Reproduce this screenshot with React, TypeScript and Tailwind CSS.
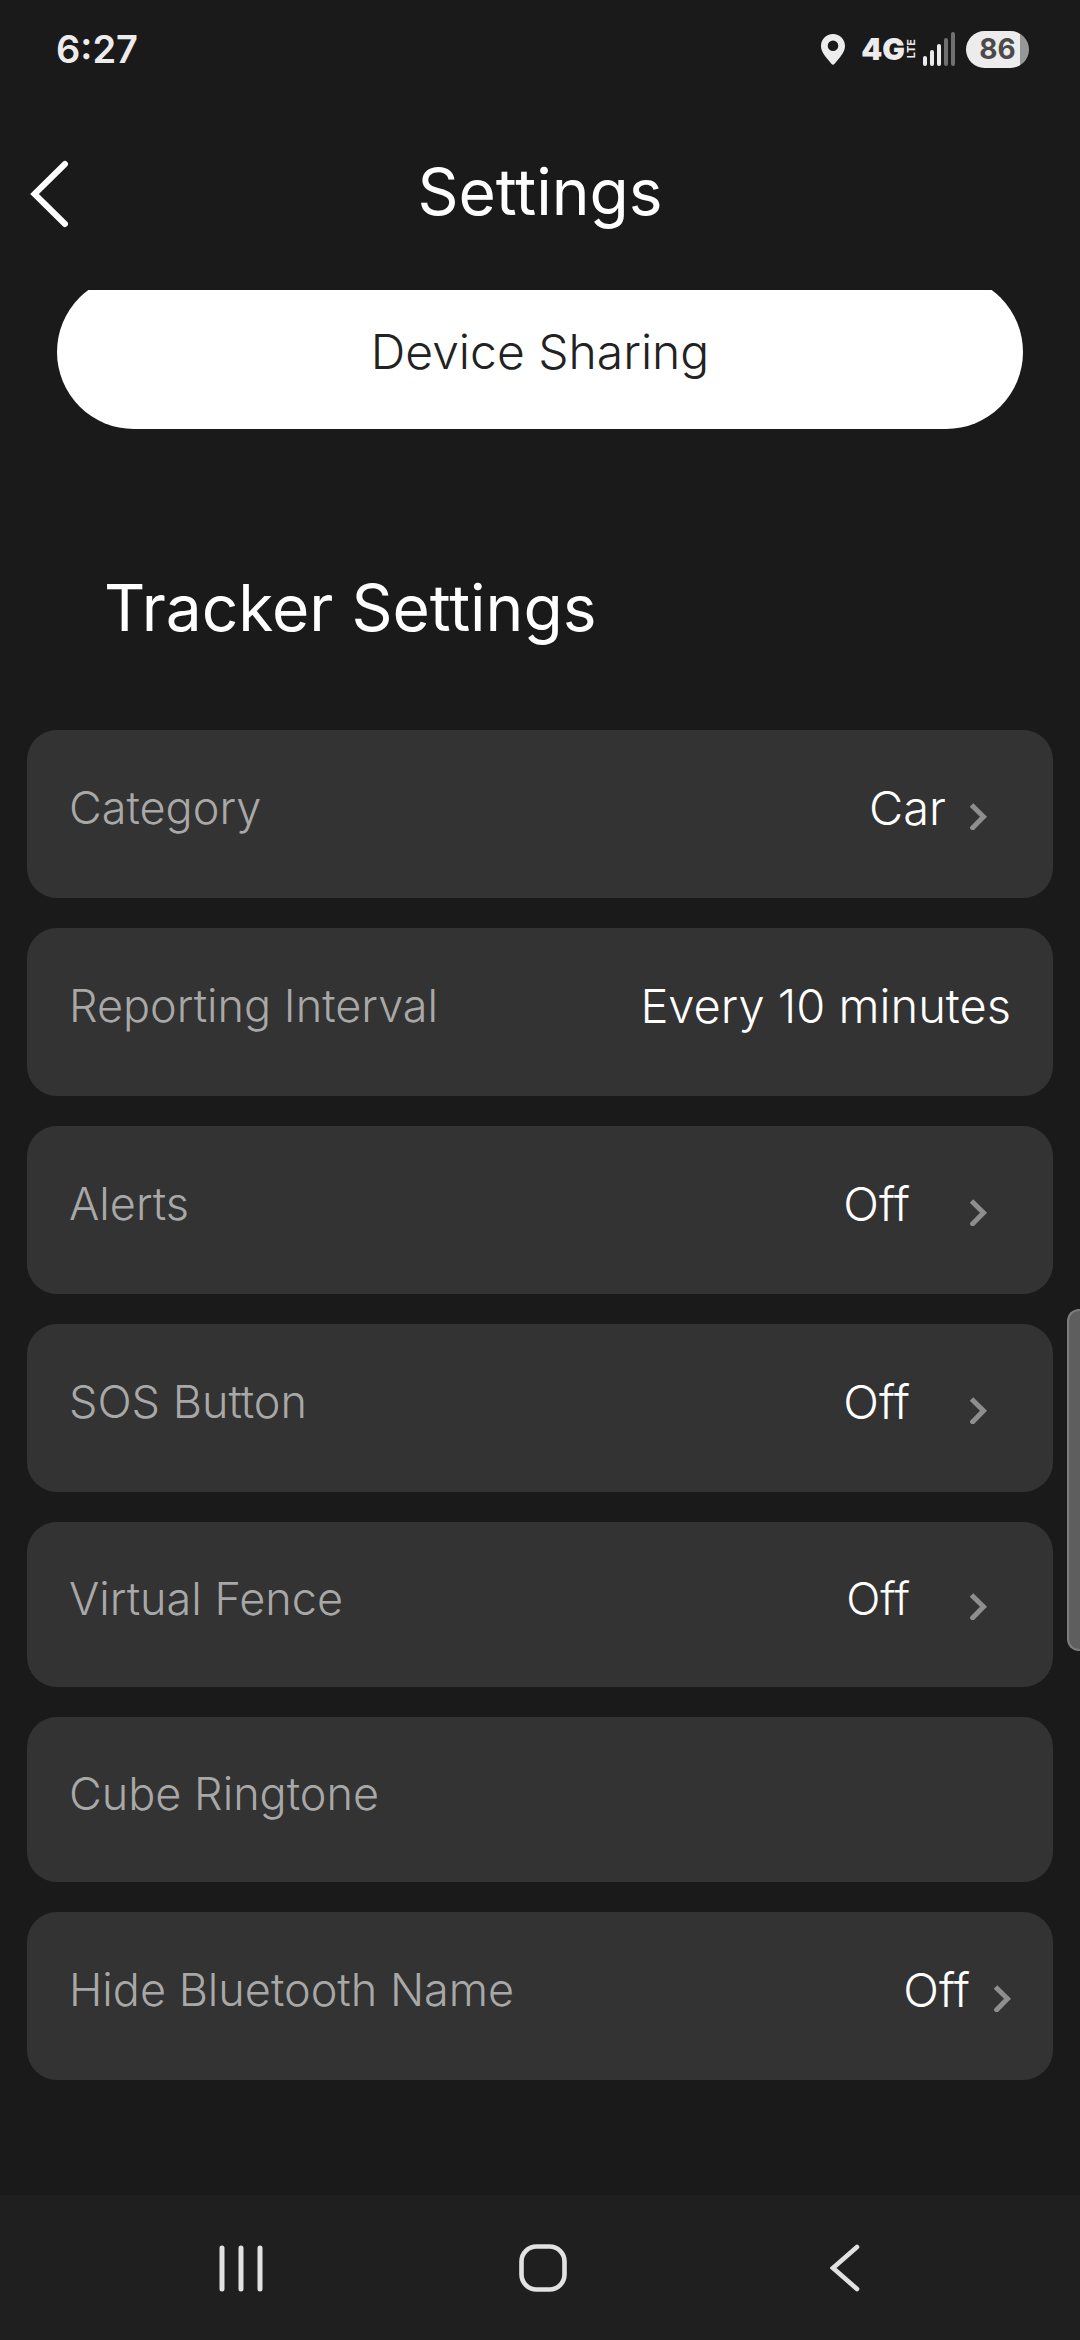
import React from 'react';

interface SettingItem {
  label: string;
  value?: string;
  chevron?: boolean;
  compact?: boolean;
  rightClass?: string;
}

const SETTINGS: SettingItem[] = [
  { label: 'Category', value: 'Car', chevron: true, rightClass: 'gap-6 pr-6' },
  { label: 'Reporting Interval', value: 'Every 10 minutes' },
  { label: 'Alerts', value: 'Off', chevron: true, rightClass: 'gap-[60px] pr-6' },
  { label: 'SOS Button', value: 'Off', chevron: true, rightClass: 'gap-[60px] pr-6' },
  { label: 'Virtual Fence', value: 'Off', chevron: true, compact: true, rightClass: 'gap-[60px] pr-6' },
  { label: 'Cube Ringtone', compact: true },
  { label: 'Hide Bluetooth Name', value: 'Off', chevron: true, rightClass: 'gap-6' },
];

const StatusBar: React.FC = () => (
  <div className="flex h-[98px] items-center justify-between pr-[51px] pl-14 text-[#ececec]">
    <time className="text-[38px] font-semibold">6:27</time>
    <div className="flex items-center">
      <svg width="24" height="31" viewBox="0 0 24 31" fill="#ececec" aria-label="Location on">
        <path fillRule="evenodd" d="M12 0C5.2 0 0 5.2 0 11.8c0 5 2.700 8.600 5.400 11.900L10.600 30c.8.900 2 .9 2.800 0l5.200-6.300C21.300 20.400 24 16.800 24 11.800 24 5.200 18.800 0 12 0Zm0 6.500a5.300 5.300 0 1 1 0 10.600 5.300 5.300 0 0 1 0-10.600Z" />
      </svg>
      <span className="ml-4 text-[30px] leading-8 font-black">4G</span>
      <span className="rotate-180 text-[11px] leading-3 font-bold [writing-mode:vertical-rl]">LTE</span>
      <svg className="ml-1.5" width="32" height="34" viewBox="0 0 32 34" aria-label="Signal 3 of 5">
        <g strokeWidth="4" strokeLinecap="round">
          <path stroke="#ececec" d="M2 26v6M9 20v12M16 14v18" />
          <path stroke="#707070" d="M23 8v24M30 2v30" />
        </g>
      </svg>
      <div className="ml-[11px] flex h-[37px] w-[63px] items-center justify-center rounded-full bg-linear-to-r from-[#ececec] from-85% to-[#979797] to-85% text-[28px] font-bold text-[#4a4a4a]">
        86
      </div>
    </div>
  </div>
);

const Chevron: React.FC = () => (
  <svg className="mt-4" width="17" height="27" viewBox="0 0 17 27" fill="none" stroke="#8e8e8e" strokeWidth="5">
    <path d="M1.500 2 13.500 13.800 1 26.500" />
  </svg>
);

const SettingRow: React.FC<{ item: SettingItem }> = ({ item }) => (
  <button
    className={`flex w-full items-center justify-between rounded-[30px] bg-[#333333] px-[42px] pb-3 text-left font-light ${item.compact ? 'h-[165px]' : 'h-[168px]'}`}
  >
    <span className="text-[45px] text-[#a8a8a8]">{item.label}</span>
    {item.value && (
      <span className={`flex items-center text-white ${item.compact ? 'text-[45px]' : 'text-[47px]'} ${item.rightClass ?? ''}`}>
        {item.value}
        {item.chevron && <Chevron />}
      </span>
    )}
  </button>
);

export default function App() {
  return (
    <div className="relative flex min-h-screen flex-col bg-[#1a1a1a] font-['Inter',sans-serif] text-white">
      <StatusBar />

      {/* Title bar */}
      <header className="grid h-48 grid-cols-[80px_1fr_80px] items-start">
        <button aria-label="Back" className="mt-[62px] pl-[30px]">
          <svg width="40" height="68" viewBox="0 0 40 68" fill="none" stroke="#ffffff" strokeWidth="6" strokeLinecap="round">
            <path d="M35 4 4.500 34 35 64" />
          </svg>
        </button>
        <h1 className="mt-[54px] text-center text-[64px] leading-20">Settings</h1>
      </header>

      {/* Scrolled list, the sharing button is partly under the title bar */}
      <main className="flex-1 overflow-hidden px-[27px]">
        <div className="-mt-[15px] px-[30px]">
          <button className="h-[154px] w-full rounded-full bg-white text-[48px] font-light text-[#222222]">Device Sharing</button>
        </div>
        <h2 className="mt-[139px] mb-[82px] pl-[77px] text-[64px] leading-20">Tracker Settings</h2>
        <div className="flex flex-col gap-[30px]">
          {SETTINGS.map(item => (
            <SettingRow key={item.label} item={item} />
          ))}
        </div>
      </main>

      {/* Edge panel handle */}
      <div className="absolute top-[1309px] right-0 h-[342px] w-[13px] rounded-l-xl border-2 border-r-0 border-[#7c7c7c] bg-[#5e5e5e]" />

      <nav className="flex h-[145px] items-center bg-[#1f1f1f] pr-[84px] pl-[90px]">
        <button aria-label="Recent apps" className="flex flex-1 justify-center">
          <svg width="48" height="48" viewBox="0 0 48 48" fill="none" stroke="#e2e2e2" strokeWidth="5" strokeLinecap="round">
            <path d="M5 4v41M24 4v41M43 4v41" />
          </svg>
        </button>
        <button aria-label="Home" className="flex flex-1 justify-center">
          <svg width="48" height="48" viewBox="0 0 48 48" fill="none" stroke="#e2e2e2" strokeWidth="4.600">
            <rect x="2.500" y="2.500" width="43" height="43" rx="15" />
          </svg>
        </button>
        <button aria-label="Go back" className="flex flex-1 justify-center">
          <svg width="30" height="48" viewBox="0 0 30 48" fill="none" stroke="#e2e2e2" strokeWidth="4.600" strokeLinecap="round">
            <path d="M27 3 3 24 27 45" />
          </svg>
        </button>
      </nav>
    </div>
  );
}
